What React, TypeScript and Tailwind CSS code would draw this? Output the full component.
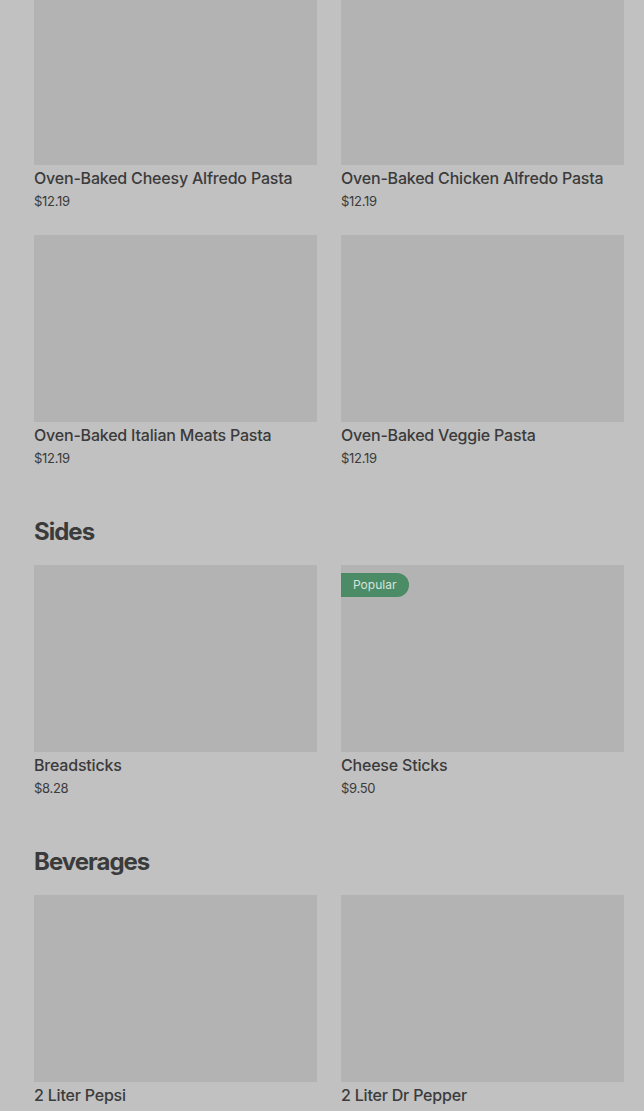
import React from "react";

interface Item {
  name: string;
  price?: string;
  popular?: boolean;
}

const ItemCard = ({ item }: { item: Item }) => (
  <div className="flex flex-col">
    <div className="relative h-[187px] bg-[#b3b3b3]">
      {item.popular && (
        <span className="absolute left-0 top-[8px] h-[24px] pl-[12px] pr-[13px] rounded-r-full bg-[#4b8b66] text-[#d6e4da] text-[12px] leading-[24px]">
          Popular
        </span>
      )}
    </div>
    <div className="mt-[2px] text-[16px] leading-[22px] font-medium tracking-[-0.2px] text-[#3b3b3b]">{item.name}</div>
    {item.price && <div className="mt-[2px] text-[13px] leading-[20px] text-[#3b3b3b] tracking-[-0.3px]">{item.price}</div>}
  </div>
);

const Grid = ({ items }: { items: Item[] }) => (
  <div className="grid grid-cols-2 gap-x-[24px] gap-y-[24px]">
    {items.map((it) => (
      <ItemCard key={it.name} item={it} />
    ))}
  </div>
);

const Section = ({ title, items }: { title: string; items: Item[] }) => (
  <div className="mt-[48px]">
    <h2 className="text-[24px] leading-[32px] font-bold tracking-[-1px] text-[#3b3b3b] mb-[17px]">{title}</h2>
    <Grid items={items} />
  </div>
);

export default function App() {
  const pasta: Item[] = [
    { name: "Oven-Baked Cheesy Alfredo Pasta", price: "$12.19" },
    { name: "Oven-Baked Chicken Alfredo Pasta", price: "$12.19" },
    { name: "Oven-Baked Italian Meats Pasta", price: "$12.19" },
    { name: "Oven-Baked Veggie Pasta", price: "$12.19" },
  ];
  const sides: Item[] = [
    { name: "Breadsticks", price: "$8.28" },
    { name: "Cheese Sticks", price: "$9.50", popular: true },
  ];
  // prices for drinks fall below the fold in this view
  const drinks: Item[] = [{ name: "2 Liter Pepsi" }, { name: "2 Liter Dr Pepper" }];

  return (
    <div className="h-[1111px] overflow-hidden bg-[#c1c1c1] font-['Inter',sans-serif]">
      <div className="pl-[34px] pr-[20px] -mt-[22px]">
        <Grid items={pasta} />
        <Section title="Sides" items={sides} />
        <Section title="Beverages" items={drinks} />
      </div>
    </div>
  );
}
